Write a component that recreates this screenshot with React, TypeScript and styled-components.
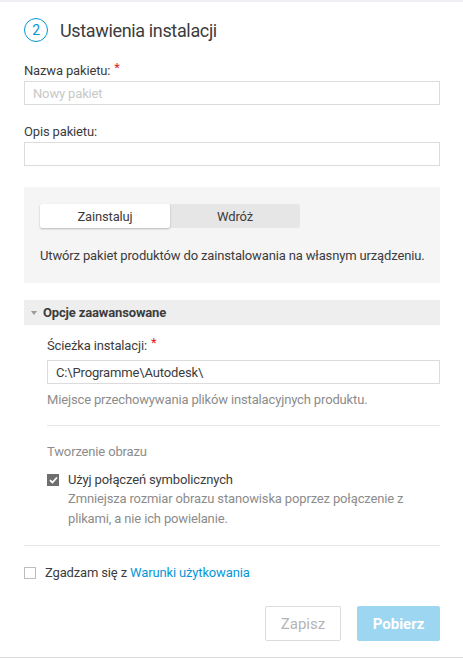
import React from "react";
import styled, { createGlobalStyle } from "styled-components";

const GlobalStyle = createGlobalStyle`
  html, body {
    margin: 0;
    padding: 0;
    background: #ffffff;
  }
  body {
    font-family: Roboto, "Liberation Sans", sans-serif;
    letter-spacing: -0.15px;
    color: #3c3c3c;
  }
`;

const Page = styled.div`
  width: 463px;
  height: 658px;
  box-sizing: border-box;
  border-top: 2px solid #eef0f3;
  border-bottom: 1px solid #d9d9d9;
  padding: 16px 23px 0 24px;
  display: flex;
  flex-direction: column;
`;

const TitleRow = styled.div`
  display: flex;
  align-items: center;
  gap: 12px;
  height: 24px;
  margin-bottom: 20px;
`;

const StepCircle = styled.div`
  width: 22px;
  height: 22px;
  border: 1px solid #0696d7;
  border-radius: 50%;
  display: flex;
  align-items: center;
  justify-content: center;
  font-size: 14px;
  color: #0696d7;
`;

const Title = styled.h1`
  margin: 0;
  font-size: 18px;
  font-weight: 400;
  letter-spacing: -0.35px;
  color: #3c3c3c;
`;

const Label = styled.div<{ $gap?: number }>`
  font-size: 13px;
  line-height: 18px;
  color: #3c3c3c;
  margin-bottom: ${(p) => p.$gap ?? 1}px;
`;

const Required = styled.span`
  color: #dd2222;
  margin-left: 4px;
  position: relative;
  top: -3px;
`;

const Field = styled.div<{ $gap?: number }>`
  margin-bottom: ${(p) => p.$gap ?? 0}px;
`;

const Input = styled.input`
  display: block;
  width: 100%;
  box-sizing: border-box;
  height: 24px;
  border: 1px solid #dcdcdc;
  padding: 0 8px;
  font-family: inherit;
  font-size: 13px;
  letter-spacing: -0.15px;
  color: #3c3c3c;
  outline: none;
  &::placeholder {
    color: #c8c8c8;
  }
`;

const Panel = styled.div`
  background: #f5f5f5;
  padding: 17px 16px 18px;
`;

const Segmented = styled.div`
  display: flex;
  width: 260px;
  height: 24px;
  background: #e6e6e6;
  border-radius: 2px;
  margin-bottom: 19px;
`;

const Segment = styled.div<{ $active?: boolean }>`
  flex: 1;
  display: flex;
  align-items: center;
  justify-content: center;
  font-size: 13px;
  color: #3c3c3c;
  border-radius: 2px;
  background: ${(p) => (p.$active ? "#ffffff" : "transparent")};
  box-shadow: ${(p) => (p.$active ? "0 1px 2px rgba(0,0,0,0.25)" : "none")};
`;

const PanelText = styled.div`
  font-size: 13px;
  line-height: 18px;
  color: #3c3c3c;
  white-space: nowrap;
`;

const AdvancedHeader = styled.div`
  margin-top: 17px;
  height: 25px;
  background: #eeeeee;
  display: flex;
  align-items: center;
  padding-left: 7px;
  gap: 6px;
  font-size: 13px;
  font-weight: 700;
  color: #3c3c3c;
`;

const Caret = styled.span`
  width: 0;
  height: 0;
  border-left: 3.5px solid transparent;
  border-right: 3.5px solid transparent;
  border-top: 4px solid #9a9a9a;
`;

const AdvancedBody = styled.div`
  padding: 12px 0 0 23px;
`;

const Hint = styled.div`
  font-size: 13px;
  line-height: 18px;
  color: #8c8c8c;
  margin-top: 7px;
`;

const Divider = styled.div<{ $top: number }>`
  height: 1px;
  background: #e6e6e6;
  margin-top: ${(p) => p.$top}px;
`;

const SubTitle = styled.div`
  font-size: 13px;
  line-height: 18px;
  color: #8c8c8c;
  margin: 17px 0 10px;
`;

const CheckRow = styled.label<{ $top?: number }>`
  display: flex;
  gap: 9px;
  align-items: flex-start;
  margin-top: ${(p) => p.$top ?? 0}px;
`;

const Box = styled.span<{ $checked?: boolean }>`
  flex: none;
  width: 12px;
  height: 12px;
  box-sizing: border-box;
  margin-top: 3px;
  border: 1px solid ${(p) => (p.$checked ? "#6e6e6e" : "#bdbdbd")};
  background: ${(p) => (p.$checked ? "#6e6e6e" : "#ffffff")};
  display: flex;
  align-items: center;
  justify-content: center;
`;

const CheckText = styled.div`
  font-size: 13px;
  line-height: 18px;
  color: #3c3c3c;
`;

const CheckDesc = styled.div`
  font-size: 13px;
  line-height: 20px;
  color: #8c8c8c;
`;

const Link = styled.a`
  color: #0696d7;
  text-decoration: none;
`;

const Actions = styled.div`
  display: flex;
  justify-content: flex-end;
  gap: 16px;
  margin-top: 24px;
`;

const Button = styled.button<{ $primary?: boolean; $w: number }>`
  width: ${(p) => p.$w}px;
  height: 35px;
  padding: 0;
  font-family: inherit;
  font-size: 15px;
  font-weight: ${(p) => (p.$primary ? 700 : 400)};
  border-radius: 2px;
  border: 1px solid ${(p) => (p.$primary ? "#9dd6f0" : "#dcdcdc")};
  background: ${(p) => (p.$primary ? "#9dd6f0" : "#ffffff")};
  color: ${(p) => (p.$primary ? "#ffffff" : "#b4b4b4")};
`;

const Check = () => (
  <svg width="9" height="8" viewBox="0 0 9 8">
    <path d="M1 4.2 L3.4 6.5 L8 1.5" stroke="#fff" strokeWidth="1.8" fill="none" />
  </svg>
);

export default function App() {
  return (
    <>
      <GlobalStyle />
      <Page>
        <TitleRow>
          <StepCircle>2</StepCircle>
          <Title>Ustawienia instalacji</Title>
        </TitleRow>

        <Field $gap={18}>
          <Label>
            Nazwa pakietu:<Required>*</Required>
          </Label>
          <Input placeholder="Nowy pakiet" />
        </Field>

        <Field $gap={21}>
          <Label>Opis pakietu:</Label>
          <Input />
        </Field>

        <Panel>
          <Segmented>
            <Segment $active>Zainstaluj</Segment>
            <Segment>Wdróż</Segment>
          </Segmented>
          <PanelText>Utwórz pakiet produktów do zainstalowania na własnym urządzeniu.</PanelText>
        </Panel>

        <AdvancedHeader>
          <Caret />
          Opcje zaawansowane
        </AdvancedHeader>

        <AdvancedBody>
          <Label $gap={5}>
            Ścieżka instalacji:<Required>*</Required>
          </Label>
          <Input defaultValue="C:\Programme\Autodesk\" />
          <Hint>Miejsce przechowywania plików instalacyjnych produktu.</Hint>
          <Divider $top={16} />
          <SubTitle>Tworzenie obrazu</SubTitle>
          <CheckRow>
            <Box $checked>
              <Check />
            </Box>
            <div>
              <CheckText>Użyj połączeń symbolicznych</CheckText>
              <CheckDesc>Zmniejsza rozmiar obrazu stanowiska poprzez połączenie z plikami, a nie ich powielanie.</CheckDesc>
            </div>
          </CheckRow>
        </AdvancedBody>

        <Divider $top={16} />

        <CheckRow $top={18}>
          <Box />
          <CheckText>
            Zgadzam się z <Link href="#">Warunki użytkowania</Link>
          </CheckText>
        </CheckRow>

        <Actions>
          <Button $w={76}>Zapisz</Button>
          <Button $primary $w={83}>
            Pobierz
          </Button>
        </Actions>
      </Page>
    </>
  );
}
